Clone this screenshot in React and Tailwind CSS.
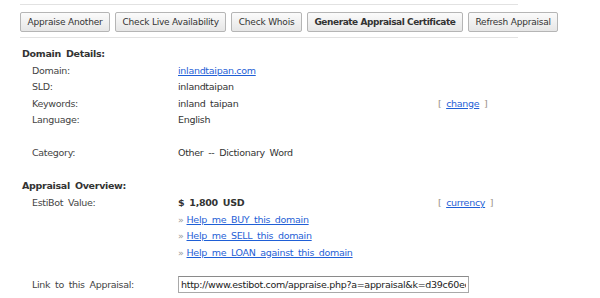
import React from "react";

const font = { fontFamily: '"DejaVu Sans", Verdana, sans-serif' };

function Btn({ children, bold }) {
  return (
    <button
      className={
        "h-[20px] shrink-0 px-[6.5px] border border-[#b5b5b5] rounded-[2px] bg-gradient-to-b from-[#fbfbfb] to-[#e6e6e6] text-[#333] text-[9px] leading-[18px] " +
        (bold ? "font-bold tracking-[-0.45px]" : "tracking-[-0.2px]")
      }
    >
      {children}
    </button>
  );
}

function Row({ label, children, extra }) {
  return (
    <div className="flex h-[16.4px] items-center">
      <div className="w-[156px] pl-[10px] text-[#444]">{label}</div>
      <div className="w-[260px]">{children}</div>
      <div>{extra}</div>
    </div>
  );
}

function Bracket({ children }) {
  return (
    <span className="text-[#9a9185]">
      [ <a className="text-[#1f5fd6] underline">{children}</a> ]
    </span>
  );
}

function Help({ children }) {
  return (
    <span>
      <span className="text-[#999] mr-[3px]">»</span>
      <a className="text-[#1f5fd6] underline">{children}</a>
    </span>
  );
}

export default function App() {
  return (
    <div className="bg-white w-[600px] h-[298px] overflow-hidden text-[9.5px] tracking-[-0.3px] text-[#333] [word-spacing:2px]" style={font}>
      <div className="ml-[20px] mt-[4px] w-[498px] border-y border-[#e2e2e2] pt-[7px] pb-[5px]">
        <div className="flex gap-[5px] whitespace-nowrap">
          <Btn>Appraise Another</Btn>
          <Btn>Check Live Availability</Btn>
          <Btn>Check Whois</Btn>
          <Btn bold>Generate Appraisal Certificate</Btn>
          <Btn>Refresh Appraisal</Btn>
        </div>
      </div>

      <div className="pl-[22px] pt-[7px]">
        <div className="h-[18px] flex items-center font-bold text-[#333]">Domain Details:</div>
        <Row label="Domain:">
          <a className="text-[#1f5fd6] underline">inlandtaipan.com</a>
        </Row>
        <Row label="SLD:">inlandtaipan</Row>
        <Row label="Keywords:" extra={<Bracket>change</Bracket>}>
          inland taipan
        </Row>
        <Row label="Language:">English</Row>
        <div className="h-[16.4px]" />
        <Row label="Category:">Other -- Dictionary Word</Row>
        <div className="h-[16px]" />
        <div className="h-[18px] flex items-center font-bold text-[#333]">Appraisal Overview:</div>
        <Row label="EstiBot Value:" extra={<Bracket>currency</Bracket>}>
          <span className="font-bold">$ 1,800 USD</span>
        </Row>
        <Row label="">
          <Help>Help me BUY this domain</Help>
        </Row>
        <Row label="">
          <Help>Help me SELL this domain</Help>
        </Row>
        <Row label="">
          <Help>Help me LOAN against this domain</Help>
        </Row>
        <div className="h-[15px]" />
        <div className="flex items-center h-[18px]">
          <div className="w-[156px] pl-[10px] text-[#444]">Link to this Appraisal:</div>
          <input
            readOnly
            value="http://www.estibot.com/appraise.php?a=appraisal&k=d39c60ec0a1b2c3d4e5f"
            className="w-[291px] h-[17px] border border-[#a9a9a9] border-t-[#8a8a8a] px-[2px] text-[9.5px] text-[#222] tracking-[-0.3px] [word-spacing:0px] outline-none"
            style={font}
          />
        </div>
      </div>
    </div>
  );
}
